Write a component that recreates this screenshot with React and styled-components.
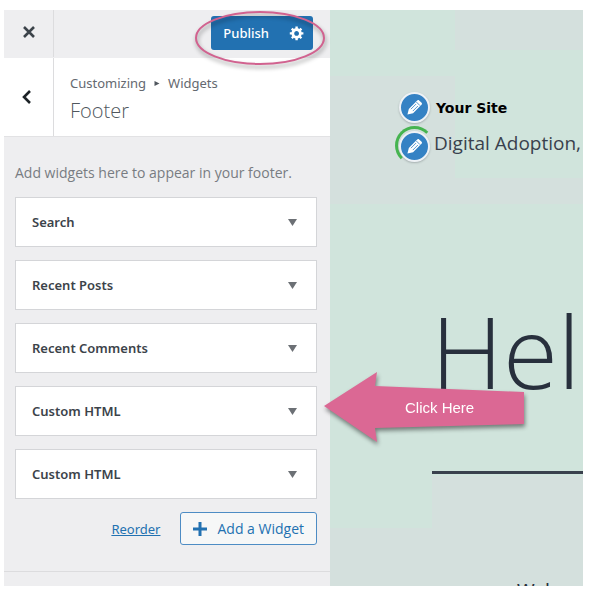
import React, { useState } from "react";
import styled, { createGlobalStyle, css } from "styled-components";

const initialWidgets = [
  { id: 1, title: "Search" },
  { id: 2, title: "Recent Posts" },
  { id: 3, title: "Recent Comments" },
  { id: 4, title: "Custom HTML" },
  { id: 5, title: "Custom HTML" },
];

function GearIcon() {
  return (
    <svg width="16" height="16" viewBox="0 0 20 20" aria-hidden="true">
      <path
        fill="#fff"
        d="M18 12h-2.18c-.17.7-.44 1.35-.81 1.93l1.54 1.54-2.1 2.1-1.54-1.54c-.58.36-1.23.63-1.91.79V19H8v-2.18c-.68-.16-1.33-.43-1.91-.79l-1.54 1.54-2.12-2.12 1.54-1.54c-.36-.58-.63-1.23-.79-1.91H1V9.03h2.17c.16-.7.44-1.35.8-1.94L2.43 5.55l2.1-2.1 1.54 1.54c.58-.37 1.24-.64 1.93-.81V2h3v2.18c.68.16 1.33.43 1.91.79l1.54-1.54 2.12 2.12-1.54 1.54c.36.59.64 1.24.8 1.94H18V12zm-8.500 1.500c1.660 0 3-1.340 3-3s-1.340-3-3-3-3 1.340-3 3 1.340 3 3 3z"
      />
    </svg>
  );
}

function PencilIcon() {
  return (
    <svg width="17" height="17" viewBox="0 0 18 18" aria-hidden="true">
      <path
        fill="#fff"
        d="M1.500 16.500l1.500-6 7.800-7.800 1.200-1.200c.6-.6 1.300-.6 1.900 0l2.600 2.600c.6.6.6 1.300 0 1.900l-1.200 1.200-7.800 7.800z"
      />
      <path
        fill="none"
        stroke="#3582c4"
        strokeWidth="0.900"
        d="M5.200 10.800l5.400-5.400M7.200 12.800l5.400-5.400M11 3.200l3.800 3.800"
      />
    </svg>
  );
}

function App() {
  const [openId, setOpenId] = useState(null);
  const toggle = (id) => setOpenId(openId === id ? null : id);

  return (
    <>
      <GlobalStyle />
      <Customizer>
        <Sidebar>
          <TopBar>
            <CloseButton aria-label="Close">
              <svg width="12" height="12" viewBox="0 0 12 12" aria-hidden="true">
                <path d="M1 1l10 10M11 1L1 11" stroke="#3c434a" strokeWidth="2.600" />
              </svg>
            </CloseButton>
            <PublishGroup>
              <PublishButton>Publish</PublishButton>
              <SettingsButton aria-label="Publish settings">
                <GearIcon />
              </SettingsButton>
              <Highlight viewBox="0 0 140 64" aria-hidden="true">
                <ellipse cx="69" cy="31" rx="64" ry="26" fill="none" stroke="#d1628f" strokeWidth="2" />
              </Highlight>
            </PublishGroup>
          </TopBar>
          <SectionHeader>
            <BackButton aria-label="Back">
              <svg width="10" height="14" viewBox="0 0 10 14" aria-hidden="true">
                <path d="M8 1L2 7L8 13" fill="none" stroke="#1d2327" strokeWidth="2.600" />
              </svg>
            </BackButton>
            <SectionTitle>
              <Breadcrumb>
                Customizing
                <svg width="6" height="5" viewBox="0 0 6 6" aria-hidden="true">
                  <path d="M0 0l6 3-6 3z" fill="#50575e" />
                </svg>
                Widgets
              </Breadcrumb>
              <Title>Footer</Title>
            </SectionTitle>
          </SectionHeader>
          <Panel>
            <Description>Add widgets here to appear in your footer.</Description>
            <WidgetList>
              {initialWidgets.map((widget) => (
                <li key={widget.id}>
                  <WidgetButton aria-expanded={openId === widget.id} onClick={() => toggle(widget.id)}>
                    {widget.title}
                    <svg width="9" height="7" viewBox="0 0 9 7" aria-hidden="true">
                      <path d="M0 0h9L4.500 7z" fill="#6c7075" />
                    </svg>
                  </WidgetButton>
                </li>
              ))}
            </WidgetList>
            <Actions>
              <ReorderButton>Reorder</ReorderButton>
              <AddButton>
                <svg width="14" height="14" viewBox="0 0 14 14" aria-hidden="true">
                  <path d="M7 0v14M0 7h14" stroke="#2271b1" strokeWidth="3" />
                </svg>
                Add a Widget
              </AddButton>
            </Actions>
          </Panel>
          <SidebarFooter />
        </Sidebar>
        <Preview>
          <SiteHeader>
            <SiteRow>
              <EditButton aria-label="Edit site title">
                <PencilIcon />
              </EditButton>
              <SiteName>Your Site</SiteName>
            </SiteRow>
            <SiteRow>
              <EditButton aria-label="Edit tagline" $ring>
                <PencilIcon />
              </EditButton>
              <Tagline>Digital Adoption,</Tagline>
            </SiteRow>
          </SiteHeader>
          <PostTitle>Hel</PostTitle>
          <Divider />
          <PostText>Welco</PostText>
        </Preview>
        <Callout>
          <svg width="206" height="80" viewBox="0 0 206 80" aria-hidden="true">
            <path d="M1 38L54 4L52 18L201 24L201 56L52 60L54 74Z" fill="#db6894" />
          </svg>
          <CalloutText>Click Here</CalloutText>
        </Callout>
      </Customizer>
    </>
  );
}

const GlobalStyle = createGlobalStyle`
  * {
    box-sizing: border-box;
  }

  body {
    margin: 0;
    background-color: #fff;
    font-family: "Noto Sans", "Open Sans", sans-serif;
    font-size: 13px;
    color: #50575e;
  }

  button {
    margin: 0;
    padding: 0;
    border: 0;
    background: none;
    font: inherit;
    color: inherit;
    cursor: pointer;
  }

  svg {
    display: block;
    flex: none;
  }
`;

const Customizer = styled.main`
  position: relative;
  display: grid;
  grid-template-columns: 326px 1fr;
  height: calc(100vh - 20px);
  margin: 10px 9px 10px 4px;
  overflow: hidden;
`;

const Sidebar = styled.aside`
  display: flex;
  flex-direction: column;
  background-color: #eeeef0;
`;

const TopBar = styled.div`
  display: flex;
  justify-content: space-between;
  align-items: center;
  height: 48px;
  padding: 0 17px 2px 0;
`;

const CloseButton = styled.button`
  display: flex;
  align-items: center;
  justify-content: center;
  width: 50px;
  height: 48px;
  padding-bottom: 2px;
  border-right: 1px solid #dcdcde;
`;

const PublishGroup = styled.div`
  position: relative;
  display: flex;
  height: 34px;
  border-radius: 3px;
  background-color: #2271b1;
`;

const PublishButton = styled.button`
  padding: 0 12px;
  color: #fff;
  font-weight: 500;
`;

const SettingsButton = styled.button`
  display: flex;
  align-items: center;
  padding: 0 8px;
`;

const Highlight = styled.svg`
  position: absolute;
  top: -9px;
  left: -20px;
  width: 140px;
  height: 64px;
  pointer-events: none;
  filter: drop-shadow(1px 3px 2px rgba(0, 0, 0, 0.4));
`;

const SectionHeader = styled.header`
  display: flex;
  height: 79px;
  background-color: #fff;
  border-bottom: 1px solid #e2e2e4;
`;

const BackButton = styled.button`
  display: flex;
  align-items: center;
  justify-content: center;
  width: 50px;
  padding-right: 3px;
  border-right: 1px solid #dcdcde;
`;

const SectionTitle = styled.div`
  padding: 15px 16px;
`;

const Breadcrumb = styled.div`
  display: flex;
  align-items: center;
  gap: 8px;
  line-height: 20px;
  color: #646970;
`;

const Title = styled.h1`
  margin: 4px 0 0;
  font-family: "Open Sans", sans-serif;
  font-size: 20px;
  font-weight: 300;
  line-height: 28px;
`;

const Panel = styled.section`
  flex: 1;
  padding: 26px 13px 0 11px;
`;

const Description = styled.p`
  margin: 0 0 14px;
  font-family: "Open Sans", sans-serif;
  font-size: 14px;
  line-height: 20px;
  color: #787c82;
`;

const WidgetList = styled.ul`
  display: grid;
  gap: 13px;
  margin: 0;
  padding: 0;
  list-style: none;
`;

const WidgetButton = styled.button`
  display: flex;
  justify-content: space-between;
  align-items: center;
  width: 100%;
  height: 50px;
  padding: 0 19px 0 16px;
  border: 1px solid #d4d5d8;
  background-color: #fff;
  color: #3c434a;
  font-weight: 600;
`;

const Actions = styled.div`
  display: flex;
  justify-content: flex-end;
  align-items: center;
  gap: 20px;
  margin-top: 13px;
`;

const ReorderButton = styled.button`
  color: #2271b1;
  text-decoration: underline;
`;

const AddButton = styled.button`
  display: flex;
  align-items: center;
  gap: 10px;
  height: 33px;
  padding: 0 12px;
  border: 1px solid #4d8cc4;
  border-radius: 3px;
  background-color: #f6f7f7;
  font-family: "Open Sans", sans-serif;
  font-size: 14px;
  color: #2271b1;
`;

const SidebarFooter = styled.div`
  height: 15px;
  border-top: 1px solid #dcdcde;
`;

const Preview = styled.section`
  display: flex;
  flex-direction: column;
  min-width: 0;
  overflow: hidden;
  background-color: #d0e4dc;
  background-image: linear-gradient(#d4e0dd, #d4e0dd), linear-gradient(#d4e0dd, #d4e0dd),
    linear-gradient(#d4e0dd, #d4e0dd), linear-gradient(#d4e0dd, #d4e0dd), linear-gradient(#d4e0dd, #d4e0dd);
  background-position: right top, 0 66px, right 168px, right bottom, right bottom;
  background-size: 128px 40px, 125px 102px, 100% 26px, 100% 58px, 151px 110px;
  background-repeat: no-repeat;
  color: #28303d;
`;

const SiteHeader = styled.div`
  display: grid;
  gap: 8px;
  padding: 82px 0 0 69px;
`;

const SiteRow = styled.div`
  display: flex;
  align-items: center;
  gap: 4px;
  height: 31px;
  white-space: nowrap;
`;

const EditButton = styled.button`
  position: relative;
  display: flex;
  flex: none;
  align-items: center;
  justify-content: center;
  width: 31px;
  height: 31px;
  border: 2px solid #eef2f6;
  border-radius: 50%;
  background-color: #3582c4;
  box-shadow: 0 1px 2px rgba(60, 67, 74, 0.3);

  ${(props) =>
    props.$ring &&
    css`
      &::before {
        content: "";
        position: absolute;
        top: -7px;
        left: -6px;
        width: 33px;
        height: 33px;
        border: 3px solid transparent;
        border-top-color: #46b450;
        border-left-color: #46b450;
        border-radius: 50%;
      }
    `}
`;

const SiteName = styled.strong`
  padding-left: 2px;
  font-family: "DejaVu Sans", sans-serif;
  font-size: 14px;
  font-weight: 700;
  color: #000;
`;

const Tagline = styled.span`
  align-self: flex-start;
  font-family: "Open Sans", sans-serif;
  font-size: 19px;
  line-height: 24px;
  color: #39414d;
`;

const PostTitle = styled.h2`
  margin: 138px 0 0 101px;
  font-family: "Open Sans", sans-serif;
  font-size: 100px;
  font-weight: 300;
  line-height: 100px;
`;

const Divider = styled.hr`
  flex: none;
  width: calc(100% - 102px);
  height: 3px;
  margin: 71px 0 0 102px;
  border: 0;
  background-color: #39414d;
`;

const PostText = styled.p`
  margin: 103px 0 0 187px;
  font-size: 19px;
  line-height: 28px;
`;

const Callout = styled.div`
  position: absolute;
  top: 358px;
  left: 319px;
  filter: drop-shadow(1px 3px 2px rgba(0, 0, 0, 0.45));
`;

const CalloutText = styled.span`
  position: absolute;
  top: 31px;
  left: 82px;
  font-family: "Liberation Sans", Arial, sans-serif;
  font-size: 15px;
  line-height: 18px;
  color: #fff;
`;

export default App;
